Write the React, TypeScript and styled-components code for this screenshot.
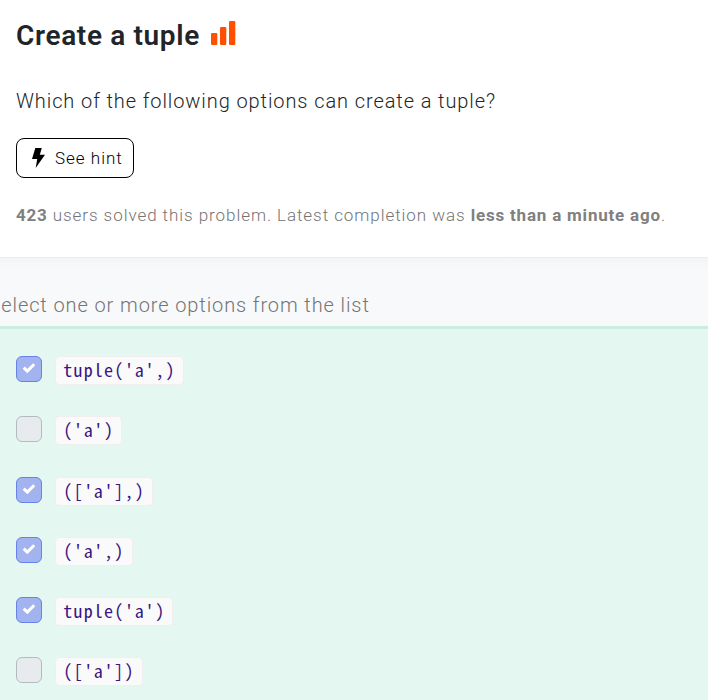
import React from "react";
import styled, { createGlobalStyle } from "styled-components";

const GlobalStyle = createGlobalStyle`
  * { box-sizing: border-box; }
  body {
    margin: 0;
    background: #fff;
    color: #212529;
    font-family: Roboto, "Liberation Sans", sans-serif;
    overflow: hidden;
  }
`;

const Page = styled.main`
  display: flex;
  flex-direction: column;
  height: 700px;
  overflow: hidden;
`;

const Problem = styled.section`
  display: flex;
  flex-direction: column;
  flex-shrink: 0;
  align-items: flex-start;
  height: 258px;
  padding: 18px 16px 0;
  border-bottom: 1px solid #e9ebed;
`;

const TitleRow = styled.div`
  display: flex;
  align-items: flex-start;
  gap: 11px;
  height: 36px;
`;

const Title = styled.h1`
  margin: 0;
  font-size: 28px;
  line-height: 36px;
  font-weight: 600;
  letter-spacing: 0.65px;
  white-space: nowrap;
`;

const DifficultyIcon = styled.svg`
  margin-top: 3px;
  fill: #ff4f00;
`;

const Question = styled.p`
  margin: 32px 0 0;
  font-size: 20px;
  font-weight: 300;
  line-height: 30px;
  letter-spacing: 0.91px;
  white-space: nowrap;
`;

const HintButton = styled.button`
  display: flex;
  align-items: center;
  gap: 10px;
  width: 118px;
  height: 40px;
  margin: 22px 0 0;
  padding: 0 0 0 15px;
  border: 1px solid #000;
  border-radius: 8px;
  background: #fff;
  color: #000;
  font-family: inherit;
  font-size: 17px;
  font-weight: 300;
  letter-spacing: 1px;
  white-space: nowrap;
`;

const Stats = styled.p`
  margin: 25px 0 0;
  color: #747474;
  font-size: 17px;
  font-weight: 300;
  line-height: 24px;
  letter-spacing: 0.94px;
  white-space: nowrap;

  b {
    color: #808080;
    font-weight: 700;
    letter-spacing: 0.8px;
  }
`;

const Prompt = styled.header`
  flex-shrink: 0;
  height: 71px;
  padding-top: 32px;
  border-bottom: 3px solid #ccecdf;
  background: linear-gradient(#f4f5f7, #f8f9fb 14px);
`;

const PromptText = styled.p`
  margin: 0 0 0 -11.5px;
  color: #747474;
  font-size: 20px;
  font-weight: 300;
  line-height: 30px;
  letter-spacing: 0.9px;
  white-space: nowrap;
`;

const Options = styled.ul`
  flex: 1;
  margin: 0;
  padding: 27px 16px 0;
  background: #e4f7f0;
  list-style: none;
`;

const Option = styled.li`
  display: flex;
  align-items: flex-start;
  gap: 13px;
  height: 60.3px;
`;

const Checkbox = styled.span<{ $checked: boolean }>`
  display: flex;
  align-items: center;
  justify-content: center;
  width: 26px;
  height: 26px;
  border: 1px solid ${(p) => (p.$checked ? "#6583e9" : "#b3bbc0")};
  border-radius: 6px;
  background: ${(p) => (p.$checked ? "#a2b3ef" : "#e8ebee")};
`;

const Code = styled.code`
  height: 29px;
  padding: 0 7px 0 7.2px;
  border: 1px solid #f0eeee;
  border-radius: 4px;
  background: #fafafa;
  color: #3b1581;
  font-family: "Noto Sans Mono CJK SC", "Noto Sans CJK SC", monospace;
  font-size: 18px;
  line-height: 25px;
  letter-spacing: 1.22px;
  white-space: pre;
`;

const options = [
  { code: "tuple('a',)", checked: true },
  { code: "('a')", checked: false },
  { code: "(['a'],)", checked: true },
  { code: "('a',)", checked: true },
  { code: "tuple('a')", checked: true },
  { code: "(['a'])", checked: false },
];

export default function App() {
  return (
    <>
      <GlobalStyle />
      <Page>
        <Problem>
          <TitleRow>
            <Title>Create a tuple</Title>
            <DifficultyIcon width="25" height="25" viewBox="0 0 25 25">
              <rect x="0" y="12" width="6.3" height="12" rx="1.2" />
              <rect x="9" y="6" width="6.3" height="18" rx="1.2" />
              <rect x="18" y="0" width="6.3" height="24" rx="1.2" />
            </DifficultyIcon>
          </TitleRow>
          <Question>Which of the following options can create a tuple?</Question>
          <HintButton>
            <svg width="13" height="20" viewBox="0 0 13 20">
              <path d="M3.3 0H9.8L7.8 6.7H13L3.7 20L5.2 11H0Z" />
            </svg>
            See hint
          </HintButton>
          <Stats>
            <b>423</b> users solved this problem. Latest completion was <b>less than a minute ago</b>.
          </Stats>
        </Problem>
        <Prompt>
          <PromptText>Select one or more options from the list</PromptText>
        </Prompt>
        <Options>
          {options.map(({ code, checked }) => (
            <Option key={code}>
              <Checkbox $checked={checked}>
                {checked && (
                  <svg width="14" height="12" viewBox="0 0 14 12">
                    <path d="M1.7 4.6L5.3 8.1L12.2 1.2" fill="none" stroke="#fff" strokeWidth="3" />
                  </svg>
                )}
              </Checkbox>
              <Code>{code}</Code>
            </Option>
          ))}
        </Options>
      </Page>
    </>
  );
}
